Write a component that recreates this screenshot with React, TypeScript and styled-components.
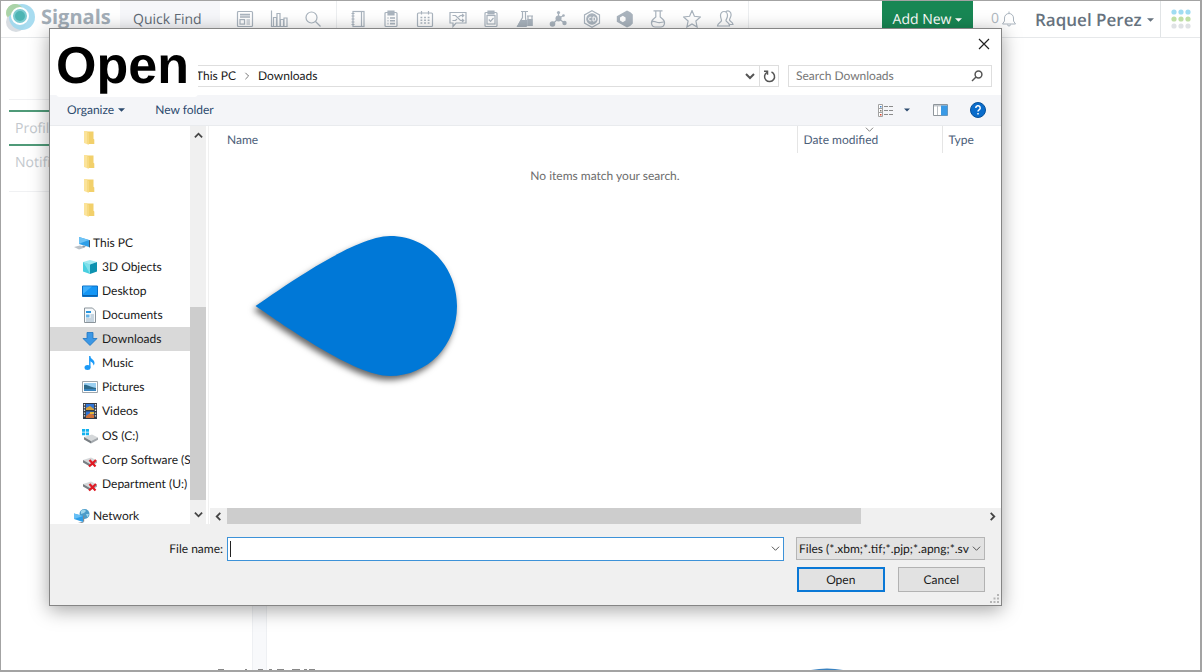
import React from "react";
import styled, { createGlobalStyle } from "styled-components";

const ui = `"Open Sans", "Noto Sans", sans-serif`;

const GlobalStyle = createGlobalStyle`
  * { box-sizing: border-box; }
  body { margin: 0; background: #fff; font-family: ${ui}; font-size: 12px; line-height: 16px; color: #1a1a1a; text-rendering: geometricPrecision; }
  button, input, select { font: inherit; color: inherit; margin: 0; padding: 0; border: 0; border-radius: 0; background: none; text-rendering: inherit; }
  svg { display: block; flex: none; }
  a { color: inherit; text-decoration: none; }
`;

/* ---------- application page behind the dialog ---------- */

const Page = styled.div`
  position: relative;
  display: flex;
  flex-direction: column;
  min-height: 100vh;
  overflow: hidden;
  border: 1px solid #a3a3a3;
  border-right-width: 2px;
  border-bottom-width: 2px;
`;

const Header = styled.header`
  display: flex;
  height: 37px;
  border-bottom: 1px solid #e6e8ea;
`;

const Brand = styled.a`
  display: flex;
  width: 119px;
  padding-left: 4px;
  gap: 5px;
  font-size: 20px;
  line-height: 32px;
  font-weight: 700;
  color: #a3aeb8;
`;

const QuickFind = styled.button`
  width: 100px;
  padding: 2px 0 0 13px;
  text-align: left;
  background: #f6f7fa;
  font-size: 14px;
  color: #5f6a75;
`;

const IconGroup = styled.nav<{ $width: number; $start: number }>`
  display: flex;
  align-items: center;
  justify-content: space-between;
  width: ${(p) => p.$width}px;
  padding: 0 14px 0 ${(p) => p.$start}px;
  border-right: 1px solid #eceef0;
`;

const IconButton = styled.button`
  display: grid;
  place-items: center;
`;

const HeaderEnd = styled.div`
  display: flex;
  flex: 1;
  justify-content: flex-end;
`;

const AddNew = styled.button`
  display: flex;
  align-items: center;
  justify-content: center;
  gap: 4px;
  width: 91px;
  padding-top: 2px;
  background: #188754;
  color: #fff;
  font-size: 14px;
`;

const Alerts = styled.button`
  display: flex;
  align-items: center;
  gap: 3px;
  width: 62px;
  padding-left: 18px;
  color: #b0b8c0;
  font-size: 14px;
`;

const User = styled.button`
  display: flex;
  align-items: center;
  gap: 5px;
  width: 125px;
  padding-top: 2px;
  font-size: 17px;
  font-weight: 600;
  color: #66727e;
`;

const Apps = styled.button`
  display: grid;
  place-items: center;
  width: 40px;
  border-left: 1px solid #e1e4e6;
`;

const Body = styled.main`
  display: flex;
  flex: 1;
`;

const Side = styled.aside`
  width: 251px;
  padding: 61px 0 0 8px;
`;

const SideTab = styled.a<{ $active?: boolean }>`
  display: block;
  height: ${(p) => (p.$active ? 36 : 46)}px;
  padding: 8px 6px;
  border: solid ${(p) => (p.$active ? "#4f9a78" : "#f0f1f3")};
  border-width: ${(p) => (p.$active ? "2px 0" : "0 0 1px")};
  font-size: 14px;
  line-height: 18px;
  color: #c3c8cd;
`;

const SideTop = styled.div`
  height: 11px;
  border-top: 1px solid #f0f1f3;
`;

const Gutter = styled.div`
  width: 15px;
  border: solid #eef0f3;
  border-width: 0 1px;
  background: #f8f9fb;
`;

const PageFoot = styled.svg`
  position: absolute;
  left: 0;
  bottom: 0;
`;

/* ---------- dialog ---------- */

const Dialog = styled.section`
  position: absolute;
  top: 27px;
  left: 48px;
  right: 198px;
  border: 1px solid #858585;
  background: #fff;
  box-shadow: 0 4px 18px rgba(0, 0, 0, 0.36);
  font-family: Lato, ${ui};
`;

const TitleRow = styled.div`
  display: flex;
  justify-content: flex-end;
  height: 36px;
  padding: 9px 11px 0 0;
`;

const CloseButton = styled.button`
  width: 12px;
  height: 12px;
`;

const Title = styled.h1`
  position: absolute;
  top: 7px;
  left: 6px;
  margin: 0;
  padding: 0;
  width: 142px;
  height: 61px;
  border-radius: 4px;
  background: #fff;
  font: bold 52px/60px "Liberation Sans", Arial, sans-serif;
  color: #000;
`;

const AddressRow = styled.div`
  display: flex;
  gap: 9px;
  height: 30px;
  padding: 0 9px 8px 96px;
`;

const Address = styled.div`
  display: flex;
  flex: 1;
  align-items: center;
  border: 1px solid #dedede;
`;

const Crumbs = styled.nav`
  display: flex;
  flex: 1;
  align-items: center;
  gap: 7px;
  padding-left: 49px;
`;

const Refresh = styled.button`
  display: grid;
  place-items: center;
  align-self: stretch;
  width: 19px;
  margin-left: 4px;
  border-left: 1px solid #dedede;
`;

const Search = styled.label`
  display: flex;
  align-items: center;
  width: 204px;
  padding: 0 8px 0 7px;
  border: 1px solid #dedede;
  input {
    flex: 1;
    min-width: 0;
    outline: none;
  }
  input::placeholder {
    color: #767676;
    opacity: 1;
  }
`;

const Toolbar = styled.div`
  display: flex;
  align-items: center;
  height: 31px;
  padding: 0 15px 0 17px;
  border-bottom: 1px solid #e9ebee;
  background: #f4f5f8;
  color: #2c4a6e;
`;

const ToolButton = styled.button<{ $after: number }>`
  display: flex;
  align-items: center;
  gap: 4px;
  margin-right: ${(p) => p.$after}px;
`;

const Spacer = styled.span`
  flex: 1;
`;

const Panes = styled.div`
  display: flex;
  height: 398px;
`;

const Tree = styled.nav`
  width: 140px;
  overflow: hidden;
`;

const TreeGroup = styled.div<{ $before?: number }>`
  margin-top: ${(p) => p.$before ?? 0}px;
`;

const TreeItem = styled.button<{ $level: number; $selected?: boolean }>`
  display: flex;
  align-items: center;
  gap: ${(p) => (p.$level ? 4 : 3)}px;
  width: 100%;
  height: 24px;
  padding-left: ${(p) => (p.$level ? 32 : 24)}px;
  background: ${(p) => (p.$selected ? "#d9d9d9" : "transparent")};
  white-space: nowrap;
`;

const VScroll = styled.div`
  display: flex;
  flex-direction: column;
  align-items: center;
  width: 16px;
  padding: 5px 0;
  background: #f0f0f0;
`;

const VThumb = styled.div`
  width: 16px;
  height: 193px;
  margin: 167px 0 auto;
  background: #cdcdcd;
`;

const Files = styled.div`
  display: flex;
  flex: 1;
  flex-direction: column;
  margin-left: 2px;
  border-left: 1px solid #f0f0f0;
`;

const FileTable = styled.table`
  width: 100%;
  table-layout: fixed;
  border-collapse: collapse;
  th {
    position: relative;
    height: 27px;
    padding: 0 0 0 6px;
    border-left: 1px solid #e5e5e5;
    font-weight: 400;
    text-align: left;
    color: #4c607a;
  }
  th:first-child {
    padding-left: 18px;
    border-left: 0;
  }
  td {
    height: 46px;
    padding: 0;
    text-align: center;
    color: #6d6d6d;
  }
`;

const Col = styled.col<{ $w?: number }>`
  width: ${(p) => (p.$w ? `${p.$w}px` : "auto")};
`;

const SortMark = styled.span`
  position: absolute;
  top: -1px;
  left: 0;
  right: 0;
  display: grid;
  justify-items: center;
`;

const Drop = styled.svg`
  margin: 36px 0 0 45px;
  overflow: visible;
  filter: drop-shadow(-2px 4px 3px rgba(0, 0, 0, 0.6));
`;

const HScroll = styled.div`
  display: flex;
  align-items: center;
  height: 16px;
  margin: auto 0 0 1px;
  padding: 0 4px 0 4px;
  background: #f0f0f0;
`;

const HThumb = styled.div`
  flex: 0 0 81%;
  height: 16px;
  margin: 0 auto 0 4px;
  background: #cdcdcd;
`;

const Footer = styled.form`
  display: grid;
  grid-template-columns: 1fr 189px;
  gap: 6px 12px;
  padding: 13px 16px 13px 50px;
  background: #f0f0f0;
`;

const FileField = styled.div`
  display: flex;
  align-items: center;
  label {
    width: 127px;
    padding-right: 4px;
    text-align: right;
  }
`;

const Combo = styled.div`
  position: relative;
  flex: 1;
  min-width: 0;
  > svg {
    position: absolute;
    top: 7px;
    right: 4px;
    pointer-events: none;
  }
`;

const FileInput = styled.input`
  display: block;
  width: 100%;
  height: 24px;
  padding: 0 20px 0 2px;
  border: 1px solid #3d92d8;
  background: #fff;
  outline: none;
`;

const Caret = styled.i`
  position: absolute;
  top: 4px;
  left: 3px;
  width: 1px;
  height: 16px;
  background: #222;
`;

const TypeSelect = styled.select`
  display: block;
  appearance: none;
  width: 100%;
  height: 23px;
  padding: 0 14px 0 2px;
  border: 1px solid #b5b5b5;
  background: #e2e2e2;
`;

const Actions = styled.div`
  grid-column: 2;
  display: grid;
  grid-template-columns: 1fr 1fr;
  gap: 13px;
  padding-left: 1px;
`;

const DialogButton = styled.button<{ $primary?: boolean }>`
  height: 25px;
  border: ${(p) => (p.$primary ? "2px solid #0a78d6" : "1px solid #b2b2b2")};
  background: #e2e2e2;
`;

const Grip = styled.svg`
  position: absolute;
  right: 2px;
  bottom: 2px;
`;

/* ---------- icons ---------- */

const Caret5 = ({ w = 7 }: { w?: number }) => (
  <svg width={w} height="4" viewBox="0 0 8 4" fill="currentColor"><path d="M0 0h8L4 4z" /></svg>
);

const chevrons = { down: "M1 3l4 4 4-4", up: "M1 7l4-4 4 4", left: "M7 1L3 5l4 4", right: "M3 1l4 4-4 4" };
const Chevron = ({ dir, c = "#444", w = 2, s = 9 }: { dir: keyof typeof chevrons; c?: string; w?: number; s?: number }) => (
  <svg width={s} height={s} viewBox="0 0 10 10" fill="none" stroke={c} strokeWidth={w}><path d={chevrons[dir]} /></svg>
);

const g = "#aab4be";
const Line = ({ children }: { children: React.ReactNode }) => (
  <svg width="18" height="18" viewBox="0 0 18 18" fill="none" stroke={g} strokeWidth="1.2">{children}</svg>
);

const leftIcons: [string, React.ReactNode][] = [
  ["Dashboard", <><rect x="1.5" y="1.5" width="15" height="15" rx="1" /><path d="M4 4.600h10M4 7h10" strokeWidth="1.600" /><rect x="4" y="9.600" width="4.500" height="4.500" /><path d="M10.500 10h3.500M10.500 12h3.500M10.500 14h3.500" /></>],
  ["Reports", <><path d="M1.500.500v16h16" /><path d="M3.500 16.500V7.500h3v9M7 16.500V3.500h3v13M10.500 16.500V9.500h3v7M14 16.500V8h3v8.500" /></>],
  ["Search", <><circle cx="7.500" cy="7.500" r="5.500" /><path d="M11.500 11.500l5 5" /></>],
];

const rightIcons: [string, React.ReactNode][] = [
  ["Notebook", <><rect x="4" y="1.500" width="11" height="15" /><path d="M12.500 1.500v15M2.500 3.500h3M2.500 6h3M2.500 9h3M2.500 12h3M2.500 14.500h3" /></>],
  ["Tasks", <><rect x="3" y="2.500" width="12" height="14" rx="1" /><path d="M6 1h6v4H6z" fill={g} /><path d="M5.500 8h1M8 8h5M5.500 10.800h1M8 10.800h5M5.500 13.600h1M8 13.600h5" strokeWidth="1.600" /></>],
  ["Calendar", <><rect x="1.500" y="3" width="15" height="13.500" rx="1" /><path d="M5.500 1v3.500M12.500 1v3.500" /><path d="M4.500 7.500h9M4.500 10.200h9M4.500 13h9" strokeWidth="1.600" strokeDasharray="1.800 1.800" /></>],
  ["Requests", <><path d="M1 2.500h16v10.500H7L4 16.500V13H1z" /><path d="M3.500 5.500h3l5 5h3M3.500 10.500h3l1.500-1.500M9.500 7l2-1.500h3M13 4l1.700 1.500L13 7M13 9l1.700 1.500L13 12" /></>],
  ["Checklist", <><rect x="3" y="2.500" width="12" height="14" rx="1" /><rect x="5" y="5.500" width="8" height="8.500" /><path d="M6 1h6v3H6z" fill={g} /><path d="M6.800 9.500l1.700 1.800L11.500 8" /></>],
  ["Experiments", <><path d="M5 1.500h7M6.500 1.500v6L1.500 16.500H10V12L9.500 7.500V1.500" /><path d="M5 10.500h5.500v5.500H2z" fill={g} /><path d="M11 6h6M12 6v9.500h4V6" /><path d="M12 9.500h4v6h-4z" fill={g} /></>],
  ["Molecules", <><g fill={g} stroke="none"><circle cx="9.500" cy="8.500" r="3" /><circle cx="3.500" cy="14" r="2.800" /><circle cx="15.500" cy="13" r="2.200" /><circle cx="9.500" cy="2.500" r="1.600" /><circle cx="14.500" cy="5.500" r="1.300" /></g><path d="M3.500 14l6-5.500 6 4.500M9.500 2.500v6l5-3" /></>],
  ["ChemDraw", <><path d="M9 .8l7.500 4.100v8.200L9 17.200 1.500 13.100V4.900z" /><circle cx="9" cy="9" r="5.200" fill={g} /><path d="M8.300 7.200H6.500L5.800 8v2l.7.800h1.800M10 7v4h1.600l1-1V8l-1-1z" stroke="#fff" strokeWidth="1" /></>],
  ["Materials", <path d="M11 .5Q15 2 16.800 4.500v9Q15 16 11 17.500L.8 11.800V6.200zM6.800 5.800 4 7.400v3.200l2.800 1.600 2.800-1.600V7.400z" fill={g} fillRule="evenodd" stroke="none" />],
  ["Samples", <><path d="M4.500 .8h9M6.800 .8v6.200L4.200 9.300C.8 12.500 3 17 6 17h6c3 0 5.200-4.500 1.800-7.700L11.200 7V.8" /><path d="M2.800 12c3-2 5 1.500 8.500.5 1.500-.5 2.500-.6 4-.5" /></>],
  ["Favorites", <path d="M9 .6l2.400 5.700 6 .7-4.500 4 1.200 6L9 13.900 3.900 17l1.200-6L.6 7l6-.7z" />],
  ["People", <><path d="M4.500 5.500a3.500 4 0 0 1 7 0c0 3-1.500 3.500-1.500 5 0 1.700 3.500 1.700 3.500 5.500H1.500c0-3.500 4-3.500 4-5.500 0-1.500-1-2-1-5z" /><path d="M9.500 2c3-2.500 6 0 5.500 3.500-.3 2-1.500 3-1.500 4.500s3.500 1.500 3.500 4.500h-3.500" /></>],
];

const Folder = () => (
  <svg width="14" height="16" viewBox="0 0 14 16"><path d="M5 1.500h6.500v7.200l.8.800v4.500H5z" fill="#f2d06b" /><path d="M2 1h3.500v12.500L7 15 2 13z" fill="#fbe39a" /><path d="M5.500 2v11L7 15V3z" fill="#f7da80" /></svg>
);

const Drive = () => (
  <><path d="M1 8l8-2.500 6 3L8 12z" fill="#d5d8da" /><path d="M1 8l7 4v2.500L1 10.500z" fill="#777d82" /><path d="M8 12l7-3.500v2.300L8 14.500z" fill="#a3a8ad" /></>
);

const treeIcons: Record<string, React.ReactNode> = {
  pc: <><path d="M5 2l10 3v7L5 9z" fill="#2e9fe8" /><path d="M5 2l10 3-8 3-2 1z" fill="#6fc3f5" /><path d="M15 5l1 .2v7.600L15 12z" fill="#40586d" /><path d="M0 12l6-1.500 5 2L5 14.500z" fill="#bcc2c8" /><path d="M9 10.500l3 1-2 1-2-1z" fill="#8e979f" /></>,
  cube: <><path d="M8 1l7 2-7 2.500L1 3z" fill="#a2eaf2" /><path d="M1 3l7 2.500V15l-7-2.500z" fill="#49cfe0" /><path d="M15 3L8 5.500V15l7-2.500z" fill="#0d92b0" /><path d="M1 3l3.500 5.500L8 5.500zM4.500 8.500L8 15V5.500z" fill="#7fe0ea" /></>,
  desktop: <><path d="M.5 3h15v10.500H.5z" fill="#1496f5" stroke="#0a6fc5" /><path d="M1 3.500h9L1 11z" fill="#3eaefb" /><path d="M1 12h14v1H1z" fill="#0b63ad" /></>,
  doc: <><path d="M2.500 1h8l3 3v11.500h-11z" fill="#f7fafc" stroke="#8b949b" /><path d="M4 4h5v2H4z" fill="#2a96df" /><path d="M4 7.500h3.500v3H4z" fill="#64b3e8" /><path d="M8.500 8H12M8.500 10H12M4 12H12M4 14H12" stroke="#7f9db5" strokeWidth=".8" /></>,
  down: <path d="M5 1.500h6v6h4L8 14.500 1 7.500h4z" fill="#3b97e5" stroke="#1d74c0" strokeWidth=".8" />,
  music: <><ellipse cx="5.500" cy="12.500" rx="3" ry="2.500" fill="#1b9af7" /><path d="M7.800 12.500V1c.5 3 4.700 3.500 4.700 7 0 1.200-.5 2-1 2.500C11.500 7.500 9 7 7.800 6" fill="#1b9af7" /><path d="M7.800 1v11.500" stroke="#1b9af7" strokeWidth="1.400" /></>,
  picture: <><path d="M.5 2.500h15v11H.5z" fill="#fff" stroke="#9fa7ad" /><path d="M2 4h12v8H2z" fill="#9bd0f2" /><path d="M2 6c3-1 5 2 12 3v3H2z" fill="#2e6b8b" /><path d="M2 10h12v2H2z" fill="#3b86c0" /></>,
  video: <><path d="M1 0h14v16H1z" fill="#333b47" /><path d="M4 1h8v6H4zM4 8.500h8V15H4z" fill="#2f75d6" /><path d="M4 5l4-2 4 3v1H4z" fill="#d4a03c" /><path d="M4 13l4-3 4 2v3H4z" fill="#cf7138" /><path d="M8 9h4v2H8z" fill="#e2b83e" /><path d="M2.500 1v14M13.500 1v14" stroke="#e2e6ea" strokeWidth="1.300" strokeDasharray="1.400 1.400" /></>,
  os: <><g transform="translate(1 1)"><Drive /></g><path d="M0 1h3v2.800H0zM3.700 1h3.300v2.800H3.700zM0 4.500h3v2.800H0zM3.700 4.500h3.300v2.800H3.700z" fill="#12b1ee" /></>,
  netdrive: <><Drive /><path d="M7.500 8l6 6.500M14 8l-7 6.500" stroke="#e01923" strokeWidth="2.200" /></>,
  network: <><circle cx="10.500" cy="6" r="5" fill="#4c9cc9" /><path d="M7 3c2-2 4-1.500 5 0l-2 2-3 1zM12 6l3 0-1.500 3.500z" fill="#9fd6ec" /><path d="M0 5.500l9 2.500v6L0 11z" fill="#2d9ee8" /><path d="M0 5.500l9 2.500-9 3z" fill="#67bff5" /><path d="M9 8l1.200-.5v6L9 14zM4 14l4 1 2-1" fill="#7c8a95" /></>,
};

const TreeIcon = ({ name }: { name: string }) => <svg width="16" height="16" viewBox="0 0 16 16">{treeIcons[name]}</svg>;

const places = [
  ["cube", "3D Objects"],
  ["desktop", "Desktop"],
  ["doc", "Documents"],
  ["down", "Downloads"],
  ["music", "Music"],
  ["picture", "Pictures"],
  ["video", "Videos"],
];
const drives = [
  ["os", "OS (C:)"],
  ["netdrive", "Corp Software (S:)"],
  ["netdrive", "Department (U:)"],
];

export default function App() {
  return (
    <>
      <GlobalStyle />
      <Page>
        <Header>
          <Brand href="#">
            <svg width="31" height="33" viewBox="0 0 31 33">
              <circle cx="10" cy="12" r="9" fill="#c5dfad" />
              <circle cx="11" cy="21" r="10" fill="#d8dde2" />
              <circle cx="17" cy="16" r="13" fill="#9fd8ee" fillOpacity=".9" />
              <path d="M10 3a9 9 0 0 1 8 5l-9 3-6 5-1.500-2A9 9 0 0 1 10 3z" fill="#a9d3a8" />
              <circle cx="15" cy="15" r="8" fill="#7ccbd0" stroke="#fff" strokeWidth="2" />
              <circle cx="15" cy="15" r="5" fill="#4db5b3" />
            </svg>
            Signals
          </Brand>
          <QuickFind>Quick Find</QuickFind>
          <IconGroup $width={117} $start={16} aria-label="Views">
            {leftIcons.map(([n, d]) => <IconButton key={n} aria-label={n}><Line>{d}</Line></IconButton>)}
          </IconGroup>
          <IconGroup $width={412} $start={12} aria-label="Items">
            {rightIcons.map(([n, d]) => <IconButton key={n} aria-label={n}><Line>{d}</Line></IconButton>)}
          </IconGroup>
          <HeaderEnd>
            <AddNew>Add New <Caret5 /></AddNew>
            <Alerts>0
              <svg width="14" height="16" viewBox="0 0 14 16" fill="none" stroke={g}><path d="M7 .5v1.500M2.500 10V7a4.500 4.500 0 0 1 9 0v3l2 3H.5zM5.500 13.500a1.500 1.500 0 0 0 3 0" /></svg>
            </Alerts>
            <User>Raquel Perez <Caret5 /></User>
            <Apps aria-label="Apps">
              <svg width="20" height="20" viewBox="0 0 20 20">
                {["#a0dcf2", "#c0dfa6", "#dfe2e5"].map((c, r) => [3, 10, 17].map((x) => <circle key={c + x} cx={x} cy={3 + r * 7} r="2.600" fill={c} />))}
              </svg>
            </Apps>
          </HeaderEnd>
        </Header>

        <Body>
          <Side>
            <SideTop />
            <SideTab href="#" $active>Profile</SideTab>
            <SideTab href="#">Notifications</SideTab>
          </Side>
          <Gutter />
        </Body>

        <PageFoot width="860" height="2" viewBox="0 0 860 2" aria-hidden="true">
          <path d="M217 1.500h6M244 1.500h2M257 1.500h5M268 1.500h3M276 1.500h7M291 1.500h8M303 1.500h3M308 1.500h6" stroke="#888" />
          <path d="M810 2Q826-1 842 2z" fill="#3a82c0" />
        </PageFoot>

        <Dialog role="dialog" aria-labelledby="dialog-title">
          <TitleRow>
            <CloseButton aria-label="Close">
              <svg width="12" height="12" viewBox="0 0 12 12" stroke="#222" strokeWidth="1.200"><path d="M1 1l10 10M11 1L1 11" /></svg>
            </CloseButton>
          </TitleRow>
          <AddressRow>
            <Address>
              <Crumbs>
                <a href="#">This PC</a>
                <Chevron dir="right" w={1} c="#555" s={8} />
                <a href="#">Downloads</a>
              </Crumbs>
              <IconButton aria-label="Previous locations"><Chevron dir="down" s={10} c="#555" /></IconButton>
              <Refresh aria-label="Refresh">
                <svg width="13" height="13" viewBox="0 0 13 13" fill="none" stroke="#555" strokeWidth="1.500"><path d="M8.500 2a5 5 0 1 1-4.500.3" /><path d="M1 1.200h3.500v3.500" /></svg>
              </Refresh>
            </Address>
            <Search>
              <input type="search" placeholder="Search Downloads" aria-label="Search Downloads" />
              <svg width="12" height="12" viewBox="0 0 12 12" fill="none" stroke="#555" strokeWidth="1.500"><circle cx="7.500" cy="4.500" r="3.400" /><path d="M5 7L1 11" /></svg>
            </Search>
          </AddressRow>

          <Toolbar>
            <ToolButton $after={30}>Organize <Caret5 w={7} /></ToolButton>
            <ToolButton $after={0}>New folder</ToolButton>
            <Spacer />
            <ToolButton $after={23} aria-label="Change your view">
              <svg width="22" height="13" viewBox="0 0 22 13">
                <path d="M.5.500h4v12h-4zM.5 4.500h4M.5 8.500h4" fill="#fff" stroke="#a2a2a2" />
                <path d="M2 2h1.500v1.500H2z" fill="#3f7fc4" /><path d="M2 6h1.500v1.500H2z" fill="#7d776d" /><path d="M2 10h1.500v1.500H2z" fill="#d8452e" />
                <path d="M6 2.500h4M11 2.500h4M6 6.500h4M11 6.500h4M6 10.500h4M11 10.500h4" stroke="#8b8b8b" />
              </svg>
              <Caret5 w={6} />
            </ToolButton>
            <ToolButton $after={22} aria-label="Preview pane">
              <svg width="15" height="12" viewBox="0 0 15 12"><path d="M.5.500h14v11H.5z" fill="#fff" stroke="#8e959b" /><path d="M1 1h13v1.500H1z" fill="#c4c9ce" /><path d="M4.500 2v9" stroke="#b9bec3" /><path d="M8 1.500h6.500v10H8z" fill="#3a9ae6" /></svg>
            </ToolButton>
            <ToolButton $after={0} aria-label="Help">
              <svg width="16" height="16" viewBox="0 0 16 16"><circle cx="8" cy="8" r="7.500" fill="#0a6ccb" stroke="#07519a" /><path d="M5.800 6a2.200 2.200 0 1 1 3.300 1.800C8.300 8.300 8 8.700 8 9.600M8 11v1.600" fill="none" stroke="#fff" strokeWidth="1.500" /></svg>
            </ToolButton>
          </Toolbar>

          <Panes>
            <Tree aria-label="Folders">
              <TreeGroup>
                {[1, 2, 3, 4].map((n) => <TreeItem key={n} $level={1} aria-label={`Folder ${n}`}><Folder /></TreeItem>)}
              </TreeGroup>
              <TreeGroup $before={9}>
                <TreeItem $level={0}><TreeIcon name="pc" />This PC</TreeItem>
                {places.map(([i, t]) => <TreeItem key={t} $level={1} $selected={t === "Downloads"}><TreeIcon name={i} />{t}</TreeItem>)}
              </TreeGroup>
              <TreeGroup $before={1}>
                {drives.map(([i, t]) => <TreeItem key={t} $level={1}><TreeIcon name={i} />{t}</TreeItem>)}
              </TreeGroup>
              <TreeGroup $before={8}>
                <TreeItem $level={0}><TreeIcon name="network" />Network</TreeItem>
              </TreeGroup>
            </Tree>
            <VScroll>
              <Chevron dir="up" />
              <VThumb />
              <Chevron dir="down" />
            </VScroll>
            <Files>
              <FileTable>
                <colgroup><Col /><Col $w={145} /><Col $w={59} /></colgroup>
                <thead>
                  <tr>
                    <th>Name</th>
                    <th><SortMark><Chevron dir="down" w={1} c="#777" s={9} /></SortMark>Date modified</th>
                    <th>Type</th>
                  </tr>
                </thead>
                <tbody>
                  <tr><td colSpan={3}>No items match your search.</td></tr>
                </tbody>
              </FileTable>
              <Drop width="204" height="142" viewBox="14 15 204 142">
                <path d="M15.500 86C45 66 115 16 150 16c38 0 67 31 67 70s-29 70-67 70C115 156 45 106 15.500 86z" fill="#0078d7" />
              </Drop>
              <HScroll>
                <Chevron dir="left" />
                <HThumb />
                <Chevron dir="right" />
              </HScroll>
            </Files>
          </Panes>

          <Footer onSubmit={(e) => e.preventDefault()}>
            <FileField>
              <label htmlFor="file-name">File name:</label>
              <Combo>
                <FileInput id="file-name" type="text" />
                <Caret />
                <Chevron dir="down" w={1} c="#444" />
              </Combo>
            </FileField>
            <Combo>
              <TypeSelect aria-label="Files of type">
                <option>Files (*.xbm;*.tif;*.pjp;*.apng;*.sv</option>
              </TypeSelect>
              <Chevron dir="down" w={1} c="#444" />
            </Combo>
            <Actions>
              <DialogButton $primary type="submit">Open</DialogButton>
              <DialogButton type="button">Cancel</DialogButton>
            </Actions>
          </Footer>
          <Grip width="9" height="9" viewBox="0 0 9 9" fill="#b5b5b5">
            <path d="M7 0h2v2H7zM3.500 3.500h2v2h-2zM7 3.500h2v2H7zM0 7h2v2H0zM3.500 7h2v2h-2zM7 7h2v2H7z" />
          </Grip>
          <Title id="dialog-title">Open</Title>
        </Dialog>
      </Page>
    </>
  );
}
